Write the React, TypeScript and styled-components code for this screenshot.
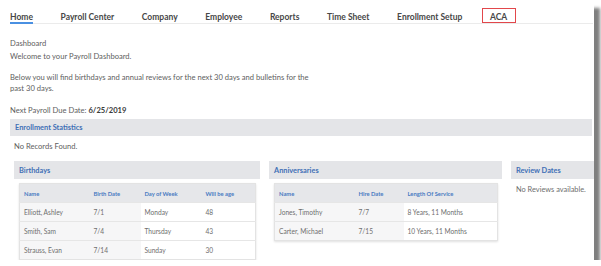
import React from "react";
import styled, { createGlobalStyle } from "styled-components";

const Global = createGlobalStyle`
  html, body { margin: 0; padding: 0; background: #ffffff; }
  body { font-family: "Lato", "Open Sans", "Liberation Sans", sans-serif; }
`;

const Page = styled.div`
  width: 594px;
  height: 260px;
  background: #ffffff;
  overflow: hidden;
  box-shadow: 7px 7px 3px -1px rgba(0, 0, 0, 0.5);
  position: relative;
`;

const Nav = styled.nav`
  display: flex;
  gap: 27.6px;
  margin: 0 1px 0 10px;
  padding-top: 12px;
  border-bottom: 1px solid #ebebeb;
`;

const Tab = styled.div<{ $active?: boolean; $marked?: boolean }>`
  position: relative;
  font-size: 8.5px;
  font-weight: 700;
  line-height: 10px;
  color: #474747;
  border-bottom: 2px solid ${(p) => (p.$active ? "#4a90e2" : "transparent")};
  margin-bottom: -1px;
  white-space: nowrap;
  ${(p) =>
    p.$marked &&
    `
    &::before {
      content: "";
      position: absolute;
      left: -8px;
      right: -9px;
      top: -4px;
      bottom: -1px;
      border: 1.5px solid #e2474b;
    }
  `}
`;

const Content = styled.div`
  padding: 0 2px 0 10px;
`;

const Intro = styled.div`
  margin-top: 13px;
  font-size: 7.6px;
  line-height: 13px;
  color: #5e5e5e;
`;

const Para = styled.p`
  margin: 9px 0 0;
  font-size: 7.6px;
  line-height: 11px;
  color: #5e5e5e;
  white-space: nowrap;
`;

const DueLine = styled.div`
  margin-top: 10px;
  font-size: 7.6px;
  line-height: 12px;
  color: #5e5e5e;
  b {
    font-weight: 700;
    color: #3a3a3a;
  }
`;

const SectionBar = styled.div`
  margin-top: 3px;
  height: 17px;
  background: #e4e5e8;
  display: flex;
  align-items: center;
  padding-left: 5px;
  font-size: 7.4px;
  font-weight: 700;
  color: #4170b6;
`;

const Empty = styled.div`
  margin: 4px 0 0 4px;
  font-size: 7.6px;
  line-height: 12px;
  color: #5e5e5e;
`;

const PanelRow = styled.div`
  display: flex;
  gap: 9px;
  margin: 9px 0 0 4px;
  align-items: flex-start;
`;

const Panel = styled.div<{ $w: number }>`
  flex: 0 0 ${(p) => p.$w}px;
  width: ${(p) => p.$w}px;
`;

const PanelHead = styled.div`
  height: 18px;
  background: #e4e5e8;
  display: flex;
  align-items: center;
  padding-left: 5px;
  font-size: 7.4px;
  font-weight: 700;
  color: #4170b6;
  white-space: nowrap;
`;

const Table = styled.table`
  margin: 4px 4px 0 5px;
  width: calc(100% - 9px);
  border-collapse: collapse;
  table-layout: fixed;
  border: 1px solid #e3e3e3;
  box-shadow: 0 1px 2px rgba(0, 0, 0, 0.12);
`;

const Th = styled.th`
  height: 18px;
  background: #e6e7ea;
  text-align: left;
  padding: 0 0 0 4px;
  font-size: 5.8px;
  font-weight: 700;
  color: #4a7bc2;
  white-space: nowrap;
`;

const Td = styled.td<{ $shade?: boolean }>`
  height: 18px;
  padding: 0 0 0 4px;
  font-size: 6.6px;
  color: #6e6e6e;
  white-space: nowrap;
  background: ${(p) => (p.$shade ? "#f6f6f7" : "#ffffff")};
  border-top: 1px solid #e6e6e6;
`;

const Note = styled.div`
  margin: 6px 0 0 5px;
  font-size: 7.4px;
  line-height: 10px;
  color: #6e6e6e;
  white-space: nowrap;
`;

const tabs = [
  "Home",
  "Payroll Center",
  "Company",
  "Employee",
  "Reports",
  "Time Sheet",
  "Enrollment Setup",
  "ACA",
];

const birthdays = [
  ["Elliott, Ashley", "7/1", "Monday", "48"],
  ["Smith, Sam", "7/4", "Thursday", "43"],
  ["Strauss, Evan", "7/14", "Sunday", "30"],
];

const anniversaries = [
  ["Jones, Timothy", "7/7", "8 Years, 11 Months"],
  ["Carter, Michael", "7/15", "10 Years, 11 Months"],
];

export default function App() {
  return (
    <>
      <Global />
      <Page>
        <Nav>
          {tabs.map((t, i) => (
            <Tab key={t} $active={i === 0} $marked={t === "ACA"}>
              {t}
            </Tab>
          ))}
        </Nav>
        <Content>
          <Intro>
            Dashboard
            <br />
            Welcome to your Payroll Dashboard.
          </Intro>
          <Para>
            Below you will find birthdays and annual reviews for the next 30 days and bulletins for the
            <br />
            past 30 days.
          </Para>
          <DueLine>
            Next Payroll Due Date: <b>6/25/2019</b>
          </DueLine>
          <SectionBar>Enrollment Statistics</SectionBar>
          <Empty>No Records Found.</Empty>
          <PanelRow>
            <Panel $w={246}>
              <PanelHead>Birthdays</PanelHead>
              <Table>
                <colgroup>
                  <col style={{ width: 70 }} />
                  <col style={{ width: 51 }} />
                  <col style={{ width: 61 }} />
                  <col />
                </colgroup>
                <thead>
                  <tr>
                    <Th>Name</Th>
                    <Th>Birth Date</Th>
                    <Th>Day of Week</Th>
                    <Th>Will be age</Th>
                  </tr>
                </thead>
                <tbody>
                  {birthdays.map((r) => (
                    <tr key={r[0]}>
                      <Td $shade>{r[0]}</Td>
                      <Td $shade>{r[1]}</Td>
                      <Td>{r[2]}</Td>
                      <Td>{r[3]}</Td>
                    </tr>
                  ))}
                </tbody>
              </Table>
            </Panel>
            <Panel $w={233}>
              <PanelHead>Anniversaries</PanelHead>
              <Table>
                <colgroup>
                  <col style={{ width: 80 }} />
                  <col style={{ width: 49 }} />
                  <col />
                </colgroup>
                <thead>
                  <tr>
                    <Th>Name</Th>
                    <Th>Hire Date</Th>
                    <Th>Length Of Service</Th>
                  </tr>
                </thead>
                <tbody>
                  {anniversaries.map((r) => (
                    <tr key={r[0]}>
                      <Td $shade>{r[0]}</Td>
                      <Td $shade>{r[1]}</Td>
                      <Td>{r[2]}</Td>
                    </tr>
                  ))}
                </tbody>
              </Table>
            </Panel>
            <Panel $w={120}>
              <PanelHead>Review Dates</PanelHead>
              <Note>No Reviews available.</Note>
            </Panel>
          </PanelRow>
        </Content>
      </Page>
    </>
  );
}
